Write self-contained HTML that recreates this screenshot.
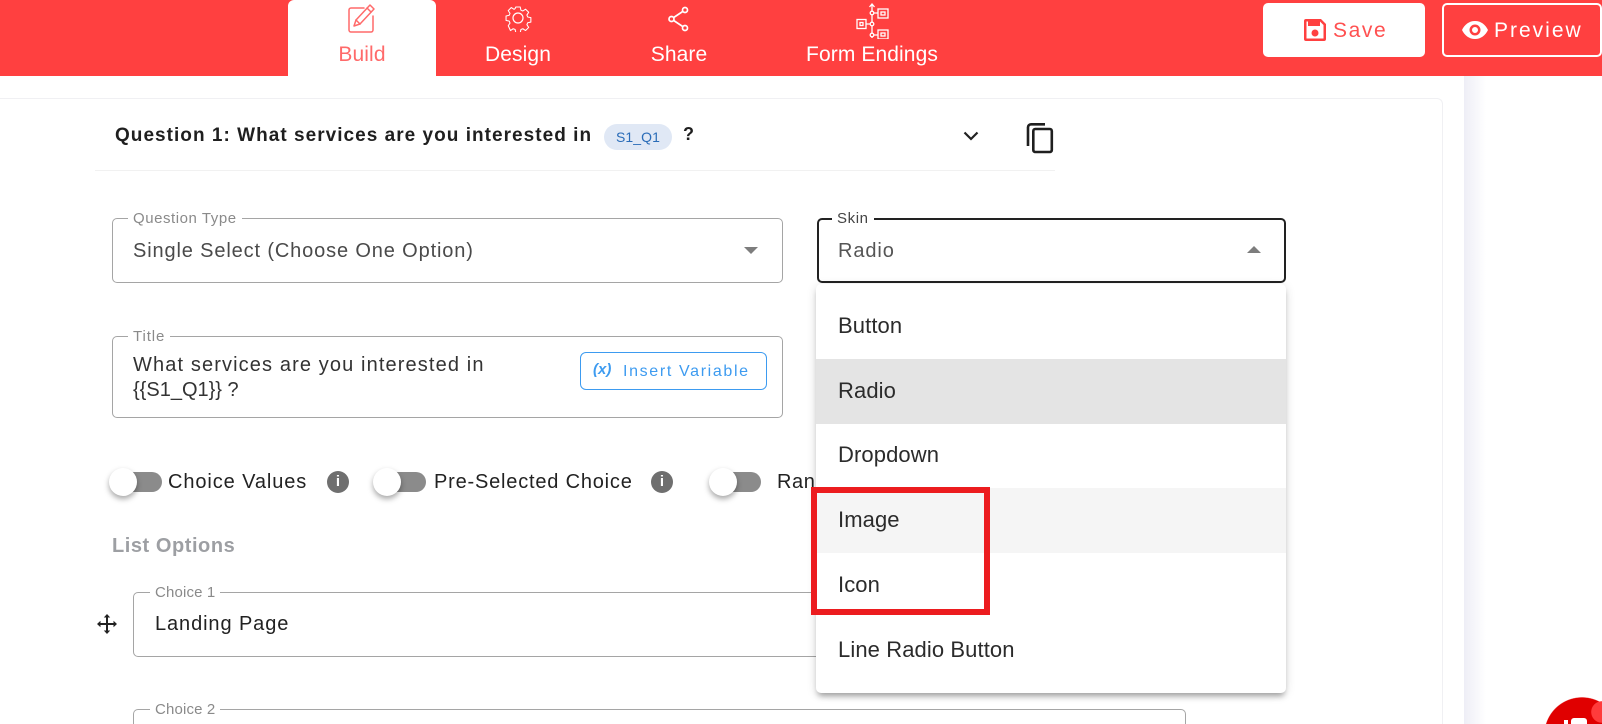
<!DOCTYPE html>
<html lang="en"><head><meta charset="utf-8"><title>Form Builder</title>
<style>
*{box-sizing:border-box}
html,body{margin:0;padding:0;background:#fff;width:1602px;height:724px;overflow:hidden}
body{font-family:"Liberation Sans",sans-serif;color:#222}
#w{position:relative;width:1602px;height:724px;overflow:hidden}
.a{position:absolute}
.t{position:absolute;white-space:nowrap;line-height:24px}
.box{position:absolute;border:1px solid #a5a5a5;border-radius:5px;background:#fff}
.leg{position:absolute;white-space:nowrap;background:#fff;padding:0 5px;font-size:15px;line-height:16px;color:#8a8a8a;letter-spacing:.55px}
.tab{position:absolute;top:43px;line-height:24px;font-size:21px;letter-spacing:.1px;color:#fff;white-space:nowrap;transform:translateX(-50%)}
.track{position:absolute;height:20px;border-radius:10px;background:#8b8b8b}
.knob{position:absolute;width:28px;height:28px;border-radius:50%;background:#fff;box-shadow:0 3px 6px rgba(0,0,0,.35)}
.info{position:absolute;width:22px;height:22px;border-radius:50%;background:#6f6f6f;color:#fff;font:bold 15px/22px "Liberation Sans",sans-serif;text-align:center}
.item{position:absolute;left:0;width:470px;height:65px;padding-left:22px;font-size:22px;letter-spacing:.1px;line-height:65px;color:#2b2b2b;white-space:nowrap}
</style></head><body><div id="w">

<div class="a" style="left:0;top:0;width:1602px;height:76px;background:#ff4040"></div>
<div class="a" style="left:288px;top:0;width:148px;height:76px;background:#fff;border-radius:6px 6px 0 0"></div>

<svg class="a" style="left:346px;top:3px" width="30" height="30" viewBox="0 0 30 30" fill="none" stroke="#ff6a6a" stroke-width="1.5" stroke-linejoin="round" stroke-linecap="round"><path d="M18 5H5a2 2 0 0 0-2 2v20a2 2 0 0 0 2 2h20a2 2 0 0 0 2-2V13"/><path d="M24 2l4 4L14 21l-6 2 2-6z"/><path d="M21 5l4 4M10 17l4 4"/></svg>
<svg class="a" style="left:504px;top:4px" width="28" height="28" viewBox="0 0 28 28" fill="none" stroke="#fff" stroke-width="1.2" stroke-linejoin="round"><circle cx="14" cy="14" r="5"/><path d="M11.5 1.500h5l.8 3.600 2.200.9 3.100-2 3.500 3.500-2 3.100.9 2.200 3.600.8v5l-3.600.8-.9 2.200 2 3.100-3.500 3.500-3.100-2-2.200.9-.8 3.600h-5l-.8-3.600-2.200-.9-3.100 2L2.900 22.800l2-3.100-.9-2.200L.4 16.700v-5l3.600-.8.900-2.200-2-3.100L6.400 2.100l3.100 2 1.200-.9z" transform="translate(1.700 1.700) scale(.88)"/></svg>
<svg class="a" style="left:667px;top:5px" width="24" height="28" viewBox="0 0 24 28" fill="none" stroke="#fff" stroke-width="1.700"><circle cx="4.500" cy="14" r="2.500"/><circle cx="18" cy="5" r="2.500"/><circle cx="18" cy="23" r="2.500"/><path d="M6.700 12.500l9-6M6.700 15.500l9 6"/></svg>
<svg class="a" style="left:856px;top:3px" width="34" height="36" viewBox="0 0 34 36" fill="none" stroke="#fff" stroke-width="1.300"><path d="M16 1v34M13.500 4L16 1l2.500 3"/><circle cx="16" cy="10" r="1.800" fill="#ff4040"/><circle cx="16" cy="21" r="1.800" fill="#ff4040"/><circle cx="16" cy="32" r="1.800" fill="#ff4040"/><path d="M18 10h4M18 32h4M10 21h4"/><rect x="22" y="6" width="10" height="9"/><rect x="25" y="9" width="4" height="3"/><rect x="1" y="16.500" width="9" height="9"/><rect x="4" y="19.500" width="3" height="3"/><rect x="22" y="27" width="10" height="9"/><rect x="25" y="30" width="4" height="3"/></svg>

<div class="tab" style="left:362px;color:#ff6a6a">Build</div>
<div class="tab" style="left:518px">Design</div>
<div class="tab" style="left:679px">Share</div>
<div class="tab" style="left:872px">Form Endings</div>

<div class="a" style="left:1263px;top:3px;width:162px;height:54px;background:#fff;border-radius:5px"></div>
<svg class="a" style="left:1304px;top:19px" width="22" height="22" viewBox="0 0 22 22"><path fill="#ff4040" fill-rule="evenodd" d="M2 0h15l5 5v15a2 2 0 0 1-2 2H2a2 2 0 0 1-2-2V2a2 2 0 0 1 2-2zM2.500 2.500v17h17V6L16 2.500z"/><rect x="4" y="2" width="12" height="5" fill="#ff4040"/><circle cx="11" cy="14" r="3.500" fill="#ff4040"/></svg>
<div class="t" style="left:1333px;top:19px;font-size:21px;letter-spacing:1.6px;color:#ff5050">Save</div>
<div class="a" style="left:1442px;top:3px;width:160px;height:54px;border:2px solid #fff;border-radius:5px"></div>
<svg class="a" style="left:1462px;top:21px" width="26" height="18" viewBox="0 0 26 18"><path fill="#fff" fill-rule="evenodd" d="M13 0C7 0 2.500 3.700 0 9c2.500 5.300 7 9 13 9s10.500-3.700 13-9C23.500 3.700 19 0 13 0zm0 3.500a5.500 5.500 0 1 1 0 11 5.500 5.500 0 0 1 0-11zM13 6a3 3 0 1 0 0 6 3 3 0 0 0 0-6z"/></svg>
<div class="t" style="left:1494px;top:19px;font-size:21px;letter-spacing:2px;color:#fff">Preview</div>

<div class="a" style="left:1464px;top:76px;width:22px;height:648px;background:linear-gradient(90deg,#eeeef6,#fff)"></div>
<div class="a" style="left:-10px;top:98px;width:1453px;height:626px;border:1px solid #f0f0f3;border-bottom:0;border-radius:6px 6px 0 0;background:#fff"></div>

<div class="t" style="left:115px;top:124px;font-size:19px;font-weight:bold;letter-spacing:1.03px;color:#1f1f1f">Question 1: What services are you interested in</div>
<div class="a" style="left:604px;top:124px;width:68px;height:26px;border-radius:13px;background:#e0e8f5;color:#2a6cb8;font-size:14px;letter-spacing:.1px;line-height:26px;text-align:center">S1_Q1</div>
<div class="t" style="left:683px;top:122px;font-size:18px;font-weight:bold;color:#1f1f1f">?</div>
<svg class="a" style="left:961px;top:130px" width="20" height="12" viewBox="0 0 20 12" fill="none" stroke="#222" stroke-width="2.200"><path d="M3.500 2.500l6.500 6.500 6.500-6.500"/></svg>
<svg class="a" style="left:1026px;top:122px" width="28" height="32" viewBox="0 0 28 32" fill="none" stroke="#1f1f1f" stroke-width="2.600"><path d="M19 2.300H5a3 3 0 0 0-3 3V24"/><rect x="7.300" y="7" width="18.500" height="23" rx="2"/></svg>
<div class="a" style="left:95px;top:170px;width:960px;height:1px;background:#f1f1f1"></div>

<div class="box" style="left:112px;top:218px;width:671px;height:65px"></div>
<div class="leg" style="left:128px;top:211px">Question Type</div>
<div class="t" style="left:133px;top:239px;font-size:20px;letter-spacing:.86px;color:#4a4a4a">Single Select (Choose One Option)</div>
<div class="a" style="left:744px;top:247px;border-left:7px solid transparent;border-right:7px solid transparent;border-top:7px solid #7d7d7d"></div>

<div class="box" style="left:112px;top:336px;width:671px;height:82px"></div>
<div class="leg" style="left:128px;top:329px;letter-spacing:.9px">Title</div>
<div class="t" style="left:133px;top:353px;font-size:20px;letter-spacing:1.12px;color:#333">What services are you interested in</div>
<div class="t" style="left:133px;top:378px;font-size:20px;color:#333">{{S1_Q1}} ?</div>
<div class="a" style="left:580px;top:352px;width:187px;height:38px;border:1px solid #3d9bf0;border-radius:6px"></div>
<div class="t" style="left:593px;top:358px;font:italic bold 15px/24px 'Liberation Sans',sans-serif;color:#3d9bf0">(x)</div>
<div class="t" style="left:623px;top:360px;font-size:16px;letter-spacing:1.65px;color:#3d9bf0">Insert Variable</div>

<div class="track" style="left:120px;top:472px;width:42px"></div><div class="knob" style="left:109px;top:468px"></div>
<div class="t" style="left:168px;top:470px;font-size:20px;letter-spacing:.9px;color:#222">Choice Values</div>
<div class="info" style="left:327px;top:471px">i</div>
<div class="track" style="left:384px;top:472px;width:42px"></div><div class="knob" style="left:373px;top:468px"></div>
<div class="t" style="left:434px;top:470px;font-size:20px;letter-spacing:.8px;color:#222">Pre-Selected Choice</div>
<div class="info" style="left:651px;top:471px">i</div>
<div class="track" style="left:719px;top:472px;width:42px"></div><div class="knob" style="left:709px;top:468px"></div>
<div class="t" style="left:777px;top:470px;font-size:20px;letter-spacing:.6px;color:#222">Ran</div>

<div class="t" style="left:112px;top:534px;font-size:20px;font-weight:bold;letter-spacing:.55px;color:#9d9fa3">List Options</div>

<svg class="a" style="left:97px;top:614px" width="20" height="20" viewBox="0 0 20 20" fill="#222"><path d="M10 0l3.200 3.500H11v5.500h5.500V6.800L20 10l-3.500 3.200V11H11v5.500h2.200L10 20l-3.200-3.500H9V11H3.500v2.200L0 10l3.500-3.200V9H9V3.500H6.800z"/></svg>
<div class="box" style="left:133px;top:592px;width:1053px;height:65px"></div>
<div class="leg" style="left:150px;top:585px;letter-spacing:.15px">Choice 1</div>
<div class="t" style="left:155px;top:612px;font-size:20px;letter-spacing:.9px;color:#222">Landing Page</div>
<div class="a" style="left:133px;top:709px;width:1053px;height:15px;border:1px solid #a5a5a5;border-bottom:0;border-radius:5px 5px 0 0;background:#fff"></div>
<div class="leg" style="left:150px;top:702px;letter-spacing:.15px">Choice 2</div>

<div class="a" style="left:817px;top:218px;width:469px;height:65px;border:2px solid #222;border-radius:5px;background:#fff"></div>
<div class="leg" style="left:832px;top:211px;color:#444;letter-spacing:.6px">Skin</div>
<div class="t" style="left:838px;top:239px;font-size:20px;letter-spacing:.9px;color:#555">Radio</div>
<div class="a" style="left:1247px;top:246px;border-left:7px solid transparent;border-right:7px solid transparent;border-bottom:7px solid #7d7d7d"></div>

<div class="a" style="left:816px;top:284px;width:470px;height:409px;background:#fff;border-radius:5px;box-shadow:0 5px 6px -2px rgba(0,0,0,.3),0 2px 10px rgba(0,0,0,.14);overflow:hidden">
<div class="item" style="top:9px">Button</div>
<div class="item" style="top:75px;background:#e4e4e4;line-height:63px">Radio</div>
<div class="item" style="top:139px;line-height:63px">Dropdown</div>
<div class="item" style="top:204px;background:#f5f5f5;line-height:63px">Image</div>
<div class="item" style="top:269px;line-height:63px">Icon</div>
<div class="item" style="top:334px;line-height:63px">Line Radio Button</div>
</div>
<div class="a" style="left:811px;top:487px;width:179px;height:128px;border:6px solid #ec1c1f"></div>

<div class="a" style="left:1544px;top:697px;width:58px;height:27px;background:radial-gradient(circle 38px at 38px 38px,#e00000 98%,rgba(224,0,0,0) 100%)"></div>
<div class="a" style="left:1591px;top:701px;width:11px;height:22px;background:radial-gradient(circle 11px at 11px 11px,#ff3b3b 96%,rgba(255,59,59,0) 100%)"></div>
<div class="a" style="left:1564px;top:720px;width:4px;height:4px;background:#fff"></div>
<div class="a" style="left:1571px;top:718px;width:16px;height:6px;background:#fff;border-radius:3px 3px 0 0"></div>
</div></body></html>
